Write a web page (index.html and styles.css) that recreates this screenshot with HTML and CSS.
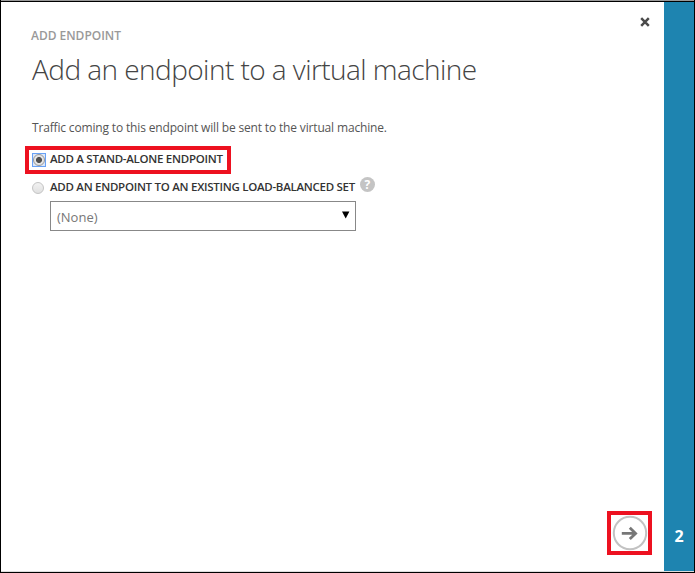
FILE: index.html
```html
<!DOCTYPE html>
<html lang="en">
<head>
<meta charset="utf-8">
<title>Add Endpoint</title>
<link rel="stylesheet" href="styles.css">
</head>
<body>
<div class="dialog">
  <main class="panel">
    <header class="head">
      <div class="eyebrow"><span>ADD ENDPOINT</span></div>
      <svg class="close" width="10" height="10" viewBox="0 0 10 10"><path d="M1.2 1.2 8.8 8.8M8.8 1.2 1.2 8.8"/></svg>
    </header>
    <h1 class="title"><span>Add an endpoint to a virtual machine</span></h1>
    <p class="intro"><span>Traffic coming to this endpoint will be sent to the virtual machine.</span></p>
    <div class="option selected">
      <span class="focus"><span class="radio on"></span></span>
      <span class="label one">ADD A STAND-ALONE ENDPOINT</span>
    </div>
    <div class="option second">
      <span class="radio"></span>
      <span class="label two">ADD AN ENDPOINT TO AN EXISTING LOAD-BALANCED SET</span>
      <span class="help">?</span>
    </div>
    <div class="select">
      <span class="value">(None)</span>
      <svg width="8" height="8" viewBox="0 0 8 8"><path d="M0 .5h7.4L3.7 7.5z"/></svg>
    </div>
    <footer class="foot">
      <div class="next">
        <svg width="36" height="36" viewBox="0 0 36 36"><circle cx="18" cy="18" r="16.2"/><path d="M9.8 18.4H23M17.8 12.8l5.8 5.6-5.8 5.6"/></svg>
      </div>
    </footer>
  </main>
  <aside class="step">2</aside>
</div>
</body>
</html>
```

FILE: styles.css
```css
* { box-sizing: border-box; }
body { margin: 0; background: #fff; font-family: "Open Sans", "Noto Sans", sans-serif; color: #555; }
.dialog { display: flex; width: 695px; height: 573px; border: 1px solid #000; border-top: 0; box-shadow: inset 0 1px #999, inset 0 2px #000, inset 0 -1px #ddd; }
.panel { flex: 1; display: flex; flex-direction: column; padding: 16px 12px 17px 24px; }
.head { display: flex; justify-content: space-between; height: 35px; padding-left: 6px; }
.eyebrow { margin-top: 10px; font-size: 12px; line-height: 19px; font-weight: 600; color: #999; letter-spacing: -.02px; }
.close { margin-top: 1px; margin-right: 2px; fill: none; stroke: #4b4b4b; stroke-width: 2.5; }
.title { margin: 0; padding-left: 7px; height: 68px; font-size: 28px; line-height: 36px; font-weight: 300; color: #444; letter-spacing: -.55px; white-space: nowrap; }
.intro { margin: 0; padding-left: 7px; height: 27px; font-size: 12px; line-height: 18px; letter-spacing: -.16px; white-space: nowrap; }
.option { display: flex; align-items: center; white-space: nowrap; }
.selected { width: 206px; height: 28px; border: 4px solid #ed1120; padding-left: 3px; }
.focus { display: flex; align-items: center; justify-content: center; width: 14px; height: 14px; border: 1px solid #68a1f5; background: #dce8fa; }
.radio { flex: none; width: 12px; height: 12px; border-radius: 50%; border: 1px solid #c4c4c4; background: linear-gradient(#f2f2f2, #e0e0e0); }
.on { background: radial-gradient(circle, #505050 0 2.6px, #e4e4e4 3.4px); border-color: #999; }
.label { font-size: 11.5px; line-height: 16px; font-weight: 600; color: #333; letter-spacing: -.28px; }
.one { margin-left: 4px; margin-top: -2px; }
.second { height: 27px; padding-left: 7px; }
.two { margin-left: 6px; margin-top: -1px; }
.help { width: 15px; height: 15px; margin: -6px 0 0 5px; border-radius: 50%; background: #c4c4c4; color: #fff; font-size: 12px; line-height: 15px; font-weight: 700; text-align: center; }
.select { display: flex; justify-content: space-between; align-items: center; width: 306px; height: 30px; margin-left: 25px; border: 1px solid #888; padding: 0 5px 0 6px; font-size: 13px; color: #777; }
.select svg { fill: #000; margin-top: -2px; }
.value { padding-top: 1px; }
.foot { display: flex; justify-content: flex-end; margin-top: auto; }
.next { display: flex; align-items: center; justify-content: center; width: 45px; height: 44px; border: 4px solid #ed1120; }
.next svg { flex: none; }
.next circle { fill: none; stroke: #c2c2c2; stroke-width: 2; }
.next path { fill: none; stroke: #777; stroke-width: 2.8; }
.step { display: flex; justify-content: center; align-items: flex-end; width: 30px; margin: 2px 0 1px; padding-bottom: 23px; background: #1e84b0; color: #fff; font-size: 16px; line-height: 24px; font-weight: 700; }
```
